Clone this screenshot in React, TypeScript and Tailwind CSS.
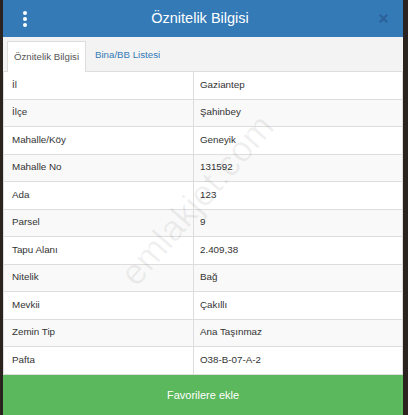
import React from "react";

const rows: [string, string][] = [
  ["İl", "Gaziantep"],
  ["İlçe", "Şahinbey"],
  ["Mahalle/Köy", "Geneyik"],
  ["Mahalle No", "131592"],
  ["Ada", "123"],
  ["Parsel", "9"],
  ["Tapu Alanı", "2.409,38"],
  ["Nitelik", "Bağ"],
  ["Mevkii", "Çakıllı"],
  ["Zemin Tip", "Ana Taşınmaz"],
  ["Pafta", "O38-B-07-A-2"],
];

export default function App() {
  return (
    <div
      className="w-[408px] h-[415px] bg-[#2a2320] flex overflow-hidden"
      style={{ fontFamily: '"Liberation Sans", Arial, sans-serif' }}
    >
      <div className="ml-[3px] w-[400px] h-full flex flex-col bg-white relative">
        {/* Header */}
        <div className="h-[37px] bg-[#337ab7] flex items-center relative shrink-0">
          <div className="w-[44px] flex flex-col items-center gap-[2px]">
            <span className="w-[4px] h-[4px] rounded-full bg-white" />
            <span className="w-[4px] h-[4px] rounded-full bg-white" />
            <span className="w-[4px] h-[4px] rounded-full bg-white" />
          </div>
          <div className="flex-1 text-center text-white text-[14.5px] leading-none pr-[6px]">
            Öznitelik Bilgisi
          </div>
          <div className="w-[44px] flex items-center justify-center pl-[5px]">
            <svg width="9" height="9" viewBox="0 0 10 10">
              <path d="M1.5 1.5 L8.5 8.5 M8.5 1.5 L1.5 8.5" stroke="#2c619a" strokeWidth="2.4" strokeLinecap="round" />
            </svg>
          </div>
        </div>
        {/* Tabs */}
        <div className="h-[35px] bg-[#f3f3f3] flex items-end pl-[4px] border-b border-[#dddddd] shrink-0">
          <div className="h-[31px] w-[79px] bg-white border border-b-0 border-[#dddddd] flex items-center justify-center text-[9.7px] text-[#555] -mb-px">
            Öznitelik Bilgisi
          </div>
          <div className="h-[31px] flex items-center pl-[9px] text-[9.7px] text-[#337ab7]">
            Bina/BB Listesi
          </div>
        </div>
        {/* Table */}
        <div className="flex flex-col border-x border-[#dddddd]">
          {rows.map(([k, v], i) => (
            <div
              key={k}
              className={`h-[27.5px] flex text-[9.8px] text-[#333] border-b border-[#dddddd] ${
                i % 2 === 1 ? "bg-[#f9f9f9]" : "bg-white"
              }`}
            >
              <div className="w-[190px] flex items-center pl-[8px] border-r border-[#dddddd]">{k}</div>
              <div className="flex-1 flex items-center pl-[6px]">{v}</div>
            </div>
          ))}
        </div>
        {/* Button */}
        <div className="flex-1 bg-[#5cb85c] flex items-center justify-center text-white text-[11px]">
          Favorilere ekle
        </div>
        {/* Watermark */}
        <div className="absolute left-[194px] top-[200px] pointer-events-none">
          <div className="-translate-x-1/2 -translate-y-1/2 -rotate-[49deg] text-[36px] text-black/[0.06] whitespace-nowrap leading-none">
            emlakjet.com
          </div>
        </div>
      </div>
    </div>
  );
}
